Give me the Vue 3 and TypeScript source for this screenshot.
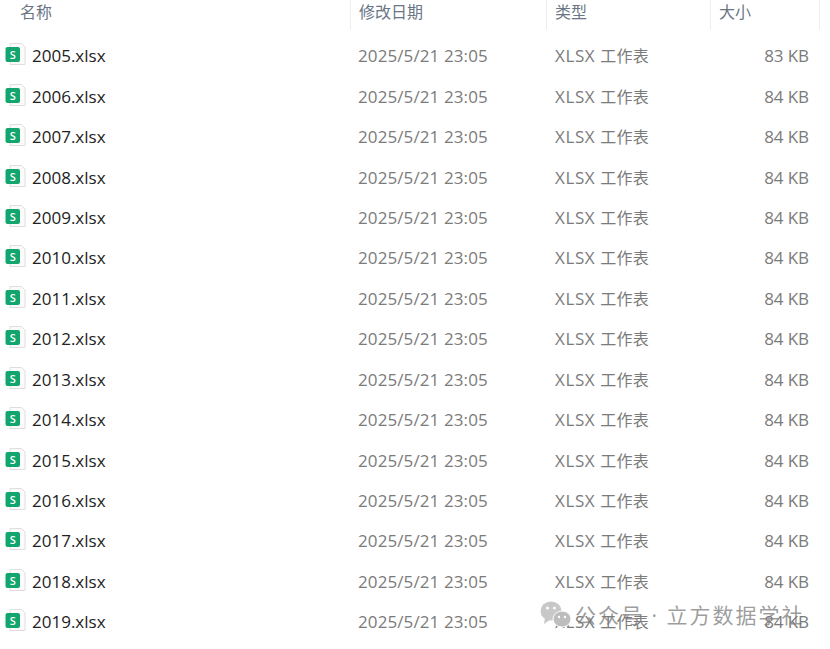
<template>
  <div class="page">
    <div class="head">
      <div class="head-cell name-col">名称</div>
      <div class="head-cell date-col">修改日期</div>
      <div class="head-cell type-col">类型</div>
      <div class="head-cell size-col">大小</div>
    </div>
    <div class="list">
      <div v-for="file in files" :key="file.name" class="row">
        <div class="name-cell">
          <svg class="file-icon" width="21" height="23" viewBox="0 0 21 23">
            <path d="M5 0.5H16.5L20 4V21.5H5Z" fill="#fbfbfb" stroke="#dedede" />
            <rect x="0.5" y="4" width="14.5" height="15" rx="2" fill="#12a56e" />
            <text x="7.75" y="15.5" class="file-letter">S</text>
          </svg>
          <span>{{ file.name }}</span>
        </div>
        <div class="date-cell">2025/5/21 23:05</div>
        <div class="type-cell">XLSX <span class="type-cjk">工作表</span></div>
        <div class="size-cell">{{ file.size }}</div>
      </div>
    </div>
    <div class="watermark">
      <svg width="34" height="30" viewBox="0 0 34 30">
        <ellipse cx="11" cy="11" rx="10.5" ry="9.5" fill="#c8c8c8" />
        <path d="M5 17L4 24L11 19Z" fill="#c8c8c8" />
        <ellipse cx="22" cy="19" rx="9" ry="8" fill="#bdbdbd" stroke="#fff" stroke-width="1" />
        <circle cx="7.5" cy="8" r="1.5" fill="#fff" />
        <circle cx="14.5" cy="8" r="1.5" fill="#fff" />
        <circle cx="19" cy="17" r="1.2" fill="#fff" />
        <circle cx="25" cy="17" r="1.2" fill="#fff" />
      </svg>
      <span>公众号 · 立方数据学社</span>
    </div>
  </div>
</template>

<script setup lang="ts">
interface FileRow {
  name: string
  size: string
}

const files: FileRow[] = []
for (let year = 2005; year <= 2019; year++) {
  files.push({ name: `${year}.xlsx`, size: year === 2005 ? '83 KB' : '84 KB' })
}
</script>

<style>
html,
body {
  margin: 0;
  background: #fff;
}
</style>

<style scoped>
.page {
  position: relative;
  width: 830px;
  height: 649px;
  overflow: hidden;
  background: #fff;
  font-family: "Open Sans", "Noto Sans CJK SC", sans-serif;
  font-size: 17px;
}

.head {
  display: flex;
  height: 30px;
  color: #6a7686;
  font-size: 16px;
  line-height: 25px;
}

.head-cell {
  box-sizing: border-box;
  border-right: 1px solid #eceef0;
  padding-left: 8px;
}

.name-col {
  width: 351px;
  padding-left: 20px;
}

.date-col {
  width: 196px;
}

.type-col {
  width: 164px;
}

.size-col {
  width: 109px;
}

.list {
  padding-top: 6.15px;
}

.row {
  display: flex;
  align-items: center;
  height: 40.43px;
  color: #7b7b7b;
  line-height: 24px;
}

.name-cell {
  display: flex;
  align-items: center;
  gap: 6px;
  width: 358px;
  padding-left: 5px;
  box-sizing: border-box;
  color: #222;
}

.file-icon {
  margin-top: -3px;
}

.file-letter {
  fill: #fff;
  font-size: 11px;
  font-weight: 600;
  text-anchor: middle;
}

.date-cell {
  width: 197px;
  letter-spacing: 0.1px;
}

.type-cell {
  width: 180px;
  letter-spacing: 0.6px;
}

.type-cjk {
  font-size: 16px;
  letter-spacing: 0.3px;
}

.size-cell {
  width: 74px;
  text-align: right;
  letter-spacing: -0.1px;
}

.watermark {
  position: absolute;
  left: 540px;
  top: 600px;
  display: flex;
  align-items: center;
  gap: 1px;
  color: rgba(125, 125, 125, 0.75);
  font-size: 21px;
  line-height: 28px;
  letter-spacing: 2px;
}
</style>
